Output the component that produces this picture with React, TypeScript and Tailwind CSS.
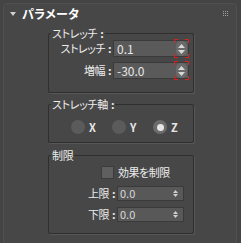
import React from "react";

const font = "font-['Noto_Sans_CJK_JP','Noto_Sans',sans-serif] [font-feature-settings:'palt']";

function Spinner({ marked }: { marked?: boolean }) {
  return (
    <div className="relative flex h-[15px] w-[11px] flex-col items-center justify-center gap-[2px] rounded-[5px] bg-[#6a6a6a]">
      <svg width="7" height="4" viewBox="0 0 7 4"><path d="M3.5 0 L7 4 L0 4Z" fill="#d8d8d8" /></svg>
      <svg width="7" height="4" viewBox="0 0 7 4"><path d="M0 0 L7 0 L3.5 4Z" fill="#d8d8d8" /></svg>
      {marked && (
        <svg className="absolute -left-[2px] -top-[2px]" width="15" height="19" viewBox="0 0 15 19">
          <path d="M0.5 4 V0.5 H4 M11 0.5 H14.5 V4 M14.5 15 V18.5 H11 M4 18.5 H0.5 V15" stroke="#e02020" fill="none" />
        </svg>
      )}
    </div>
  );
}

function SmallSpin() {
  return (
    <div className="flex flex-col items-center gap-[1px]">
      <svg width="5" height="3" viewBox="0 0 5 3"><path d="M2.5 0 L5 3 L0 3Z" fill="#cfcfcf" /></svg>
      <svg width="5" height="3" viewBox="0 0 5 3"><path d="M0 0 L5 0 L2.5 3Z" fill="#cfcfcf" /></svg>
    </div>
  );
}

function Field({ value, big, marked }: { value: string; big?: boolean; marked?: boolean }) {
  return big ? (
    <div className="flex h-[17px] w-[76px] items-center justify-between border border-[#3a3a3a] bg-[#5a5a5a] pl-[3px] pr-[1px] text-[12px] leading-none text-[#e8e8e8]">
      <span>{value}</span>
      <Spinner marked={marked} />
    </div>
  ) : (
    <div className="flex h-[15px] w-[67px] items-center justify-between border border-[#3a3a3a] bg-[#585858] pl-[2px] pr-[5px] text-[11px] leading-none text-[#d8d8d8]">
      <span>{value}</span>
      <SmallSpin />
    </div>
  );
}

function Label({ text }: { text: string }) {
  return (
    <span className="whitespace-nowrap text-right text-[11px] leading-none tracking-[-0.5px] text-[#ececec]">
      {text}
      <span className="ml-[3px] font-bold">:</span>
    </span>
  );
}

function Group({ title, colon, children, className }: { title: string; colon?: boolean; children: React.ReactNode; className?: string }) {
  return (
    <fieldset className={`ml-[44px] w-[146px] rounded-[2px] border border-[#2f2f2f] shadow-[1px_1px_0_#575757] ${className ?? ""}`}>
      <legend className="ml-[2px] whitespace-nowrap px-[1px] text-[11px] leading-[14px] tracking-[-0.3px] text-[#ececec]">
        {title}
        {colon && <span className="ml-[3px] font-bold">:</span>}
      </legend>
      {children}
    </fieldset>
  );
}

function Radio({ label, on }: { label: string; on?: boolean }) {
  return (
    <div className="flex items-center gap-[4px]">
      <div className={`flex h-[14px] w-[14px] items-center justify-center rounded-full ${on ? "bg-[#6b6b6b]" : "bg-[#5b5b5b]"}`}>
        {on && <div className="h-[7px] w-[7px] rounded-full bg-[#e6e6e6]" />}
      </div>
      <span className="w-[8px] text-[11px] font-bold leading-none text-[#e6e6e6]">{label}</span>
    </div>
  );
}

export default function App() {
  return (
    <div className={`h-[243px] w-[241px] overflow-hidden bg-[#444444] pl-[3px] pr-[4px] pt-[3px] ${font}`}>
      <div className="h-[260px] rounded-t-[4px] border border-[#505050] bg-[#474747]">
        <div className="flex h-[20px] items-center pl-[6px] pr-[6px]">
          <svg width="6" height="4" viewBox="0 0 6 4" className="mr-[6px]"><path d="M0 0 H6 L3 4Z" fill="#d0d0d0" /></svg>
          <span className="text-[12px] font-bold leading-none tracking-[0.3px] text-white">パラメータ</span>
          <svg width="6" height="6" viewBox="0 0 6 6" className="ml-auto mr-[1px]">
            {[0, 2, 4].map((x) =>
              [0, 2, 4].map((y) => <rect key={`${x}-${y}`} x={x} y={y} width="1" height="1" fill="#a0a0a0" />)
            )}
          </svg>
        </div>

        <Group title="ストレッチ" colon className="mt-[2px] h-[67px]">
          <div className="grid grid-cols-[62px_76px] items-center gap-x-[2px] gap-y-[5px]">
            <Label text="ストレッチ" />
            <Field value="0.1" big marked />
            <Label text="増幅" />
            <Field value="-30.0" big marked />
          </div>
        </Group>

        <Group title="ストレッチ軸" colon className="mt-[4px] h-[46px]">
          <div className="flex items-center gap-[15px] pl-[22px] pt-[9px]">
            <Radio label="X" />
            <Radio label="Y" />
            <Radio label="Z" on />
          </div>
        </Group>

        <Group title="制限" className="mt-[5px] h-[86px]">
          <div className="flex flex-col pt-[4px]">
            <div className="flex items-center gap-[4px] pl-[52px]">
              <div className="h-[13px] w-[13px] border border-[#3c3c3c] bg-[#5f5f5f]" />
              <span className="text-[11px] leading-none tracking-[-0.5px] text-[#ececec]">効果を制限</span>
            </div>
            <div className="mt-[7px] grid grid-cols-[66px_67px] items-center gap-x-[2px] gap-y-[6px]">
              <Label text="上限" />
              <Field value="0.0" />
              <Label text="下限" />
              <Field value="0.0" />
            </div>
          </div>
        </Group>
      </div>
    </div>
  );
}
